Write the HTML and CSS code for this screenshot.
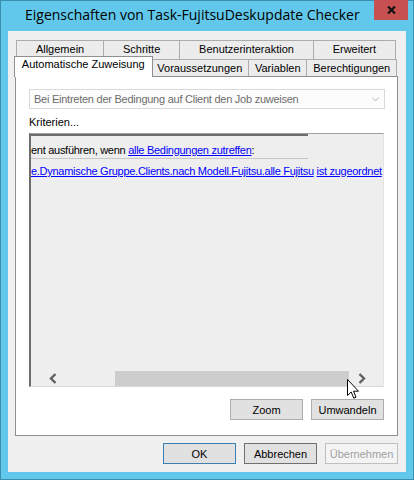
FILE: index.html
```html
<!DOCTYPE html>
<html lang="de">
<head>
    <meta charset="UTF-8">
    <title>Eigenschaften von Task-FujitsuDeskupdate Checker</title>
    <link rel="stylesheet" href="styles.css">
</head>
<body>
    <div class="window">
        <div class="title-bar">
            <div class="title">Eigenschaften von Task-FujitsuDeskupdate Checker</div>
            <div class="close-button">
                <svg width="9" height="8" viewBox="0 0 9 8"><path d="M1 0.5 L8 7.5 M8 0.5 L1 7.5" stroke="#111" stroke-width="2.2"/></svg>
            </div>
        </div>

        <div class="client">
            <div class="tab-row back-row">
                <div class="tab">Allgemein</div>
                <div class="tab">Schritte</div>
                <div class="tab">Benutzerinteraktion</div>
                <div class="tab">Erweitert</div>
            </div>
            <div class="tab-row front-row">
                <div class="tab selected">Automatische Zuweisung</div>
                <div class="tab">Voraussetzungen</div>
                <div class="tab">Variablen</div>
                <div class="tab">Berechtigungen</div>
            </div>

            <div class="tab-panel">
                <div class="combo">
                    <span>Bei Eintreten der Bedingung auf Client den Job zuweisen</span>
                    <svg width="7" height="5" viewBox="0 0 7 5"><path d="M0.5 0.5 L3.5 4 L6.5 0.5" stroke="#b9b9b9" fill="none"/></svg>
                </div>
                <div class="label">Kriterien...</div>

                <div class="criteria">
                    <div class="criteria-bar"></div>
                    <div class="rule-head">ent ausführen, wenn <a href="#">alle Bedingungen zutreffen</a>:</div>
                    <div class="rule"><a href="#">e.Dynamische Gruppe.Clients.nach Modell.Fujitsu.alle Fujitsu</a> <a href="#">ist zugeordnet</a></div>

                    <div class="h-scroll">
                        <div class="scroll-arrow">
                            <svg width="8" height="11" viewBox="0 0 8 11"><path d="M6.5 1 L2 5.5 L6.5 10" stroke="#606060" stroke-width="2.4" fill="none"/></svg>
                        </div>
                        <div class="scroll-thumb"></div>
                        <div class="scroll-arrow">
                            <svg width="8" height="11" viewBox="0 0 8 11"><path d="M1.5 1 L6 5.5 L1.5 10" stroke="#606060" stroke-width="2.4" fill="none"/></svg>
                        </div>
                    </div>
                </div>

                <div class="panel-buttons">
                    <button>Zoom</button>
                    <button>Umwandeln</button>
                </div>
            </div>

            <div class="dialog-buttons">
                <button class="default">OK</button>
                <button class="focused">Abbrechen</button>
                <button disabled>Übernehmen</button>
            </div>
        </div>

        <svg class="cursor" width="13" height="21" viewBox="0 0 13 21"><path d="M0.5 0.5 L0.5 16.5 L4.2 13 L6.8 19.2 L9 18.2 L6.5 12.2 L11.5 12.2 Z" fill="#fff" stroke="#000" stroke-width="1"/></svg>
    </div>
</body>
</html>
```

FILE: styles.css
```css
body {
    margin: 0;
    padding: 0;
    font-family: "Liberation Sans", Arial, sans-serif;
}
.window {
    position: relative;
    width: 414px;
    height: 480px;
    box-sizing: border-box;
    background-color: #62c8eb;
    box-shadow: inset 0 0 0 1px #3b8fae;
    display: flex;
    flex-direction: column;
}
.title-bar {
    height: 31px;
    display: flex;
    align-items: flex-start;
}
.title {
    font-family: "Open Sans", sans-serif;
    font-size: 14px;
    line-height: 19px;
    padding: 5px 0 0 25px;
    color: #000;
}
.close-button {
    margin-left: auto;
    margin-right: 6px;
    width: 34px;
    height: 20px;
    background-color: #c75050;
    display: flex;
    align-items: center;
    justify-content: center;
}
.client {
    margin: 0 8px 8px;
    height: 441px;
    box-sizing: border-box;
    background-color: #f0f0f0;
    padding: 9px 8px 8px 7px;
    display: flex;
    flex-direction: column;
    font-size: 11px;
    color: #000;
}
.tab-row {
    display: flex;
}
.tab {
    flex: 1 1 auto;
    text-align: center;
    background-color: #ececec;
    border: 1px solid #acacac;
    border-bottom: none;
    margin-left: -1px;
    white-space: nowrap;
}
.tab:first-child {
    margin-left: 0;
}
.back-row {
    height: 19px;
    margin: 0 2px 0 1px;
}
.back-row .tab {
    line-height: 17px;
}
.front-row {
    height: 19px;
    margin: -2px 1px 0 1px;
    align-items: flex-end;
    position: relative;
}
.front-row .tab {
    height: 16px;
    line-height: 16px;
}
.front-row .tab.selected {
    height: 20px;
    line-height: 15px;
    margin: 0 -1px -1px -2px;
    padding: 0 1px;
    background-color: #fff;
    border-color: #8f8f8f;
    position: relative;
    z-index: 1;
}
.tab-panel {
    flex: 1;
    background-color: #fff;
    border: 1px solid #8f8f8f;
    padding: 12px 13px 15px 13px;
    display: flex;
    flex-direction: column;
}
.combo {
    height: 20px;
    box-sizing: border-box;
    border: 1px solid #d9d9d9;
    background-color: #fcfcfc;
    display: flex;
    align-items: center;
    justify-content: space-between;
    padding: 0 5px 0 4px;
    margin-right: -1px;
    color: #6d6d6d;
    font-size: 11px;
    letter-spacing: -0.25px;
}
.label {
    margin-top: 6px;
    line-height: 14px;
    font-size: 11px;
}
.criteria {
    margin-top: 4px;
    height: 254px;
    box-sizing: border-box;
    background-color: #eeeeee;
    border-top: 1px solid #a0a0a0;
    border-left: 2px solid #6d6d6d;
    border-right: 1px solid #e4e4e4;
    border-bottom: 1px solid #d8d8d8;
    display: flex;
    flex-direction: column;
    font-size: 11px;
    letter-spacing: -0.28px;
    white-space: nowrap;
    overflow: hidden;
}
.criteria-bar {
    width: 277px;
    height: 2px;
    background-color: #6d6d6d;
}
.rule-head {
    width: 277px;
    padding-top: 6px;
    line-height: 16px;
    border-bottom: 1px solid #c8c8c8;
}
.rule {
    margin-top: 4px;
    line-height: 16px;
}
.criteria a {
    color: #0000ff;
}
.h-scroll {
    margin-top: auto;
    height: 15px;
    display: flex;
    align-items: center;
    padding-left: 13px;
}
.scroll-arrow {
    width: 17px;
    height: 15px;
    display: flex;
    align-items: center;
    justify-content: center;
}
.scroll-thumb {
    width: 234px;
    height: 15px;
    margin: 0 4px 0 54px;
    background-color: #cdcdcd;
}
.panel-buttons {
    margin-top: 12px;
    display: flex;
    justify-content: flex-end;
    gap: 8px;
}
button {
    width: 73px;
    height: 21px;
    padding: 0;
    background-color: #e1e1e1;
    border: 1px solid #adadad;
    border-radius: 0;
    font-family: "Liberation Sans", Arial, sans-serif;
    font-size: 11px;
    color: #000;
}
.dialog-buttons {
    margin-top: 7px;
    display: flex;
    justify-content: flex-end;
    gap: 8px;
}
.dialog-buttons .default {
    border-color: #3c7fb1;
}
.dialog-buttons .focused {
    border-color: #707070;
}
.dialog-buttons button:disabled {
    background-color: #f4f4f4;
    border-color: #bfbfbf;
    color: #a0a0a0;
}
.cursor {
    position: absolute;
    left: 347px;
    top: 379px;
}
```
